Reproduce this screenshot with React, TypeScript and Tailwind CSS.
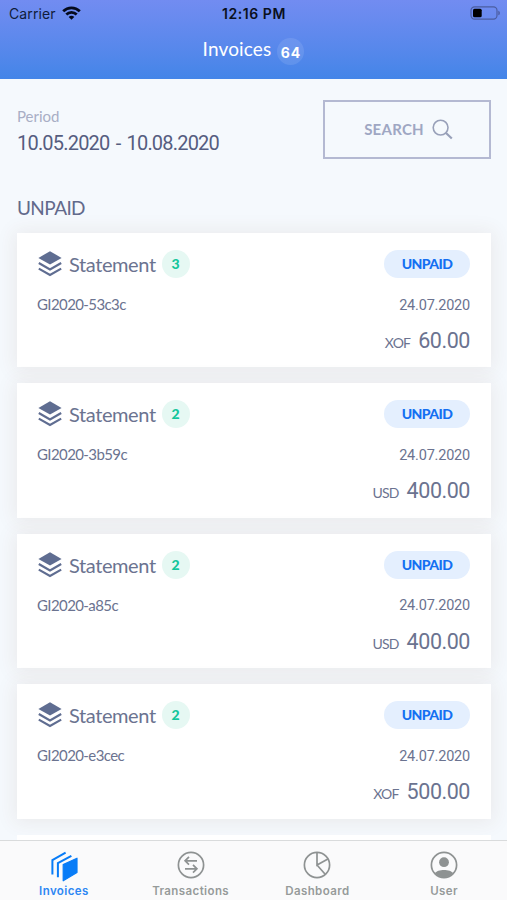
import type { ReactNode } from "react";

interface Invoice {
  id: string;
  count: number;
  date: string;
  currency: string;
  amount: string;
}

const INVOICES: Invoice[] = [
  { id: "GI2020-53c3c", count: 3, date: "24.07.2020", currency: "XOF", amount: "60.00" },
  { id: "GI2020-3b59c", count: 2, date: "24.07.2020", currency: "USD", amount: "400.00" },
  { id: "GI2020-a85c", count: 2, date: "24.07.2020", currency: "USD", amount: "400.00" },
  { id: "GI2020-e3cec", count: 2, date: "24.07.2020", currency: "XOF", amount: "500.00" },
];

const StatusBar = () => (
  <div className="grid h-7 grid-cols-3 items-center pl-[9px] pr-[6px] font-['Inter',sans-serif] text-black">
    <div className="flex items-center gap-[6px]">
      <span className="text-[14px] leading-none tracking-[0.1px] text-[#101c3a]">Carrier</span>
      <svg className="-mt-[2px]" width="19" height="14" viewBox="0 0 19 14" fill="none" stroke="#050b1c" strokeWidth="2.7">
        <path d="M1.2 5.3C5.8 .6 13.2 .6 17.8 5.3" />
        <path d="M4.3 8.5C7.2 5.6 11.8 5.6 14.7 8.5" />
        <path d="M6.7 10.9C8.3 9.4 10.7 9.4 12.3 10.9L9.5 13.7Z" fill="#050b1c" stroke="none" />
      </svg>
    </div>
    <span className="-ml-[2px] text-center text-[14px] leading-none font-semibold tracking-[0.55px] whitespace-nowrap text-[#0a1020]">
      12:16 PM
    </span>
    <svg className="-mt-[2px] justify-self-end" width="31" height="14" viewBox="0 0 31 14" fill="none">
      <rect x="1" y=".8" width="26" height="12.4" rx="3.6" stroke="#4b5da0" strokeWidth="1.2" />
      <rect x="3" y="2.7" width="8.7" height="8.6" rx="1.5" fill="#000" />
      <path d="M28.3 4.7C30.4 5.3 30.4 8.7 28.3 9.3Z" fill="#4b5da0" />
    </svg>
  </div>
);

const Header = () => (
  <header className="h-[79px] shrink-0 bg-linear-to-b from-[#728cf1] to-[#4385e8]">
    <StatusBar />
    <div className="flex items-center justify-center gap-[6px] pt-[10px] text-white">
      <h1 className="-mt-[5px] text-[19px] leading-7 tracking-[0.15px]">Invoices</h1>
      <span className="flex size-[27px] items-center justify-center rounded-full bg-white/10 pt-px font-['Inter',sans-serif] text-[14px] font-bold tracking-[0.8px]">
        64
      </span>
    </div>
  </header>
);

const LayersIcon = () => (
  <svg width="26" height="28" viewBox="0 0 26 28" fill="none">
    <path d="M13 1.2 24.6 7.9 13 14.6 1.4 7.9Z" fill="#5f6d91" />
    <path d="M1.8 13 13 19.4 24.2 13M1.8 18.6 13 25 24.2 18.6" stroke="#5f6d91" strokeWidth="2.2" />
  </svg>
);

const InvoiceCard = ({ invoice }: { invoice: Invoice }) => (
  <article className="h-[134.4px] shrink-0 bg-white pt-[17px] pr-[21px] pl-5 text-[#6b7390] shadow-[0_1px_18px_3px_rgba(110,60,40,0.08)]">
    <div className="flex h-7 items-center justify-between">
      <div className="flex items-center">
        <LayersIcon />
        <span className="ml-[6px] w-[87px] text-[20px] leading-7 tracking-[-0.4px]">Statement</span>
        <span className="ml-[6px] flex size-7 items-center justify-center rounded-full bg-[#e6f8f3] pr-px pb-px text-[14px] font-black text-[#14c69c]">
          {invoice.count}
        </span>
      </div>
      <span className="flex h-7 w-[86px] items-center justify-center rounded-full bg-[#e4effe] pb-px text-[14px] font-black tracking-[-0.6px] text-[#1470f2]">
        UNPAID
      </span>
    </div>
    <div className="mt-4 flex h-5 items-center justify-between text-[15px]">
      <span className="tracking-[-0.6px]">{invoice.id}</span>
      <span className="pt-[3px] font-['Roboto',sans-serif] text-[14.5px] tracking-[-0.2px]">{invoice.date}</span>
    </div>
    <div className="mt-[13px] flex h-7 items-baseline justify-end gap-2">
      <span className="text-[14px] tracking-[-0.8px]">{invoice.currency}</span>
      <span className="font-['Roboto',sans-serif] text-[21.5px] leading-7 tracking-[-0.45px]">{invoice.amount}</span>
    </div>
  </article>
);

const InvoicesIcon = () => (
  <svg width="28" height="32" viewBox="0 0 28 32" fill="none">
    <path d="M13.2 13.6 27 7.2V21.4L13.2 29.8Z" fill="#087cf7" stroke="#087cf7" strokeWidth="1.2" strokeLinejoin="round" />
    <path d="M2.4 23.6V9L15.6 1.7M7.9 26.2V12L21.4 4.8" stroke="#087cf7" strokeWidth="2" />
  </svg>
);

const TransactionsIcon = () => (
  <svg width="28" height="28" viewBox="0 0 28 28" fill="none" stroke="#8e9292" strokeWidth="1.7">
    <circle cx="14" cy="14" r="12.6" />
    <path d="M20 9.8H8.2M12 5.9 8.1 9.8 12 13.7M8 17.8H19.8M16 13.9 19.9 17.8 16 21.7" />
  </svg>
);

const DashboardIcon = () => (
  <svg width="28" height="28" viewBox="0 0 28 28" fill="none" stroke="#8e9292" strokeWidth="1.7">
    <circle cx="14" cy="14" r="12.6" />
    <path d="M14 1.4V14L24.9 8M14 14 22.2 23.3" />
  </svg>
);

const UserIcon = () => (
  <svg width="28" height="28" viewBox="0 0 28 28" fill="none">
    <circle cx="14" cy="14" r="12.6" stroke="#8e9292" strokeWidth="1.7" />
    <circle cx="14" cy="11.2" r="4.9" fill="#8e9292" />
    <path d="M4.8 22.3C7.5 17.8 20.5 17.8 23.2 22.3C18.4 27.8 9.6 27.8 4.8 22.3Z" fill="#8e9292" />
  </svg>
);

const TABS: { label: string; icon: ReactNode; active?: boolean }[] = [
  { label: "Invoices", icon: <InvoicesIcon />, active: true },
  { label: "Transactions", icon: <TransactionsIcon /> },
  { label: "Dashboard", icon: <DashboardIcon /> },
  { label: "User", icon: <UserIcon /> },
];

const TabBar = () => (
  <nav className="grid h-[60px] shrink-0 grid-cols-4 border-t border-[#d9dbdc] bg-[#fafafb] font-['Inter',sans-serif]">
    {TABS.map((tab) => (
      <div key={tab.label} className={`flex flex-col items-center pt-[10px] pl-px ${tab.active ? "text-[#2d87f3]" : "text-[#969a9a]"}`}>
        <div className="flex h-[30px] items-start justify-center">{tab.icon}</div>
        <span className="mt-[2px] text-[11.5px] leading-4 font-semibold tracking-[0.4px]">{tab.label}</span>
      </div>
    ))}
  </nav>
);

export default function App() {
  return (
    <div className="flex h-[900px] w-[507px] flex-col overflow-hidden bg-[#f5f9fd] font-['Lato',sans-serif]">
      <Header />
      <main className="flex-1 overflow-hidden pr-4 pl-[17px]">
        <section className="flex justify-between pt-[21px]">
          <div className="pt-[6px]">
            <p className="text-[15px] leading-5 text-[#a8aec5]">Period</p>
            <p className="mt-[3px] font-['Roboto',sans-serif] text-[20px] leading-7 tracking-[-0.8px] text-[#555d80] [word-spacing:2px]">
              10.05.2020 - 10.08.2020
            </p>
          </div>
          <button className="flex h-[59px] w-[168px] items-center justify-center gap-2 border-2 border-[#b4b9d2] pl-[3px] text-[15px] font-bold tracking-[0.25px] text-[#9fa7c3]">
            SEARCH
            <svg width="21" height="21" viewBox="0 0 21 21" fill="none" stroke="#98a0b9">
              <circle cx="8.6" cy="8.6" r="7.4" strokeWidth="1.6" />
              <path d="m14 14 5.8 5.5" strokeWidth="2.2" />
            </svg>
          </button>
        </section>
        <h2 className="mt-[35px] mb-[11px] text-[19px] leading-7 tracking-[-0.6px] text-[#626a8b]">UNPAID</h2>
        <div className="flex flex-col gap-4">
          {INVOICES.map((invoice) => (
            <InvoiceCard key={invoice.id} invoice={invoice} />
          ))}
          <div className="h-[134.4px] shrink-0 bg-white" />
        </div>
      </main>
      <TabBar />
    </div>
  );
}
